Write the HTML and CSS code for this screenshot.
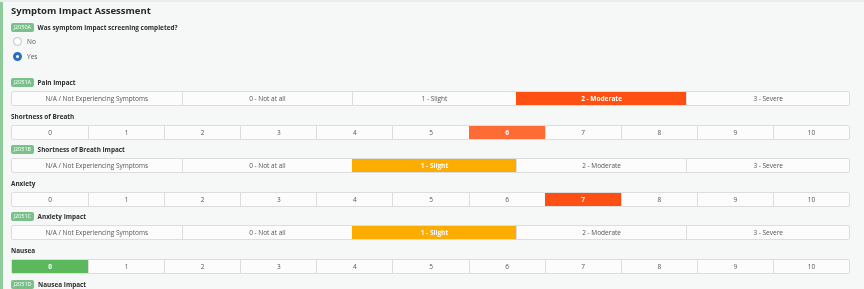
FILE: index.html
```html
<!DOCTYPE html>
<html lang="en">
	<head>
		<meta charset="utf-8">
		<title>Symptom Impact Assessment</title>
		<link rel="stylesheet" href="styles.css">
	</head>
	<body>
		<div id="wrap">
			<h1>Symptom Impact Assessment</h1>

			<div class="question">
				<p class="label"><span class="code">J2050A</span>Was symptom impact screening completed?</p>
				<label class="radio"><span class="dot"></span>No</label>
				<label class="radio"><span class="dot checked"></span>Yes</label>
			</div>

			<div class="block">
				<p class="label"><span class="code">J2051A</span>Pain Impact</p>
				<div class="scale impact">
					<span>N/A / Not Experiencing Symptoms</span>
					<span>0 - Not at all</span>
					<span>1 - Slight</span>
					<span class="on red">2 - Moderate</span>
					<span>3 - Severe</span>
				</div>
			</div>

			<div class="block">
				<p class="label">Shortness of Breath</p>
				<div class="scale numbers">
					<span>0</span><span>1</span><span>2</span><span>3</span><span>4</span><span>5</span>
					<span class="on orange">6</span>
					<span>7</span><span>8</span><span>9</span><span>10</span>
				</div>
			</div>

			<div class="block">
				<p class="label"><span class="code">J2051B</span>Shortness of Breath Impact</p>
				<div class="scale impact">
					<span>N/A / Not Experiencing Symptoms</span>
					<span>0 - Not at all</span>
					<span class="on amber">1 - Slight</span>
					<span>2 - Moderate</span>
					<span>3 - Severe</span>
				</div>
			</div>

			<div class="block">
				<p class="label">Anxiety</p>
				<div class="scale numbers">
					<span>0</span><span>1</span><span>2</span><span>3</span><span>4</span><span>5</span><span>6</span>
					<span class="on red">7</span>
					<span>8</span><span>9</span><span>10</span>
				</div>
			</div>

			<div class="block">
				<p class="label"><span class="code">J2051C</span>Anxiety Impact</p>
				<div class="scale impact">
					<span>N/A / Not Experiencing Symptoms</span>
					<span>0 - Not at all</span>
					<span class="on amber">1 - Slight</span>
					<span>2 - Moderate</span>
					<span>3 - Severe</span>
				</div>
			</div>

			<div class="block">
				<p class="label">Nausea</p>
				<div class="scale numbers">
					<span class="on green">0</span>
					<span>1</span><span>2</span><span>3</span><span>4</span><span>5</span><span>6</span><span>7</span><span>8</span><span>9</span><span>10</span>
				</div>
			</div>

			<div class="block">
				<p class="label"><span class="code">J2051D</span>Nausea Impact</p>
			</div>
		</div>
	</body>
</html>
```

FILE: styles.css
```css
* {
	margin: 0px;
	padding: 0px;
	box-sizing: border-box;
}

html, body {
	height: 100%;
	overflow: hidden;
}

body {
	background-color: rgb(246, 247, 247);
	font-family: "Open Sans", "Liberation Sans", sans-serif;
	color: rgb(51, 51, 51);
	border-top: 2px solid rgb(236, 236, 236);
}

#wrap {
	min-height: 100%;
	border-left: 3px solid rgb(143, 204, 156);
	padding: 1px 14px 0px 8px;
	will-change: transform; /*文字のにじみ防止*/
}

h1 {
	font-size: 9.5px;
	font-weight: bold;
	line-height: 16px;
	color: rgb(40, 40, 40);
	margin-bottom: 2px;
}

.label {
	display: flex;
	align-items: center;
	font-size: 6.4px;
	font-weight: bold;
	line-height: 13px;
	color: rgb(45, 45, 45);
}

.code {
	display: inline-block;
	background-color: rgb(122, 192, 138);
	color: rgb(255, 255, 255);
	font-size: 5.5px;
	font-weight: normal;
	line-height: 9px;
	padding: 0px 2.5px;
	border-radius: 2px;
	margin-right: 4px;
}

/* screening question */
.question {
	margin-bottom: 12px;
}

.radio {
	display: flex;
	align-items: center;
	gap: 5px;
	height: 15px;
	padding-left: 2px;
	font-size: 6.5px;
	color: rgb(85, 85, 85);
}

.dot {
	width: 9px;
	height: 9px;
	border-radius: 50%;
	border: 1px solid rgb(190, 190, 190);
	background-color: rgb(255, 255, 255);
}

.dot.checked {
	border: 3px solid rgb(41, 110, 195);
}

/* rating bars */
.block {
	margin-bottom: 3.6px;
}

.block .label {
	margin-bottom: 2px;
}

.scale {
	display: grid;
	height: 15px;
	border: 1px solid rgb(221, 221, 221);
	border-radius: 2px;
	background-color: rgb(252, 252, 252);
}

.impact {
	grid-template-columns: 170fr 171fr 164fr 171fr 163fr;
}

.numbers {
	grid-template-columns: repeat(11, 1fr);
}

.scale span {
	display: flex;
	align-items: center;
	justify-content: center;
	font-size: 6.5px;
	color: rgb(85, 85, 85);
	border-left: 1px solid rgb(221, 221, 221);
}

.scale span:first-child {
	border-left: none;
}

.scale .on {
	color: rgb(255, 255, 255);
	font-weight: bold;
	border-left-color: transparent;
}

.red {
	background-color: rgb(253, 80, 18);
}

.orange {
	background-color: rgb(255, 107, 53);
}

.amber {
	background-color: rgb(253, 172, 0);
}

.green {
	background-color: rgb(92, 184, 92);
}
```
